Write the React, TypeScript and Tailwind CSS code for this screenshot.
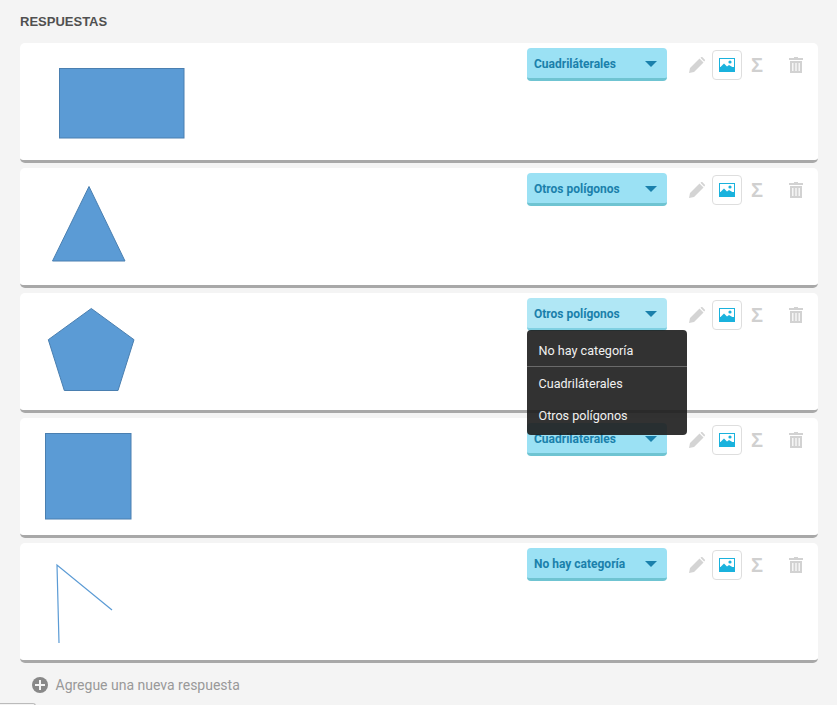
import React from 'react';

const answers = [
  { id: 1, label: 'Cuadriláterales', shape: 'rect' },
  { id: 2, label: 'Otros polígonos', shape: 'triangle' },
  { id: 3, label: 'Otros polígonos', shape: 'pentagon', open: true },
  { id: 4, label: 'Cuadriláterales', shape: 'square' },
  { id: 5, label: 'No hay categoría', shape: 'lines' },
];

function Shape({ kind }: { kind: string }) {
  return (
    <svg width="180" height="117" viewBox="0 0 180 117" className="shrink-0">
      {kind === 'rect' && <rect x="39.5" y="25.5" width="124.5" height="69.5" fill="#5b9bd5" stroke="#4a7fb0" />}
      {kind === 'triangle' && <polygon points="69,18.5 32.5,93 105,93" fill="#5b9bd5" stroke="#4a7fb0" />}
      {kind === 'pentagon' && <polygon points="71.3,15.5 114,46.7 98,97.5 44.3,97.5 28.3,46.7" fill="#5b9bd5" stroke="#4a7fb0" />}
      {kind === 'square' && <rect x="25.5" y="15.5" width="85.5" height="85.5" fill="#5b9bd5" stroke="#4a7fb0" />}
      {kind === 'lines' && <polyline points="39,100 37,22 92,67" fill="none" stroke="#5b9bd5" strokeWidth="1.2" />}
    </svg>
  );
}

function Tools() {
  return (
    <div className="flex items-start">
      <svg width="16" height="16" viewBox="0 0 16 16" className="mt-[14px] ml-[22px] shrink-0" fill="#d4d4d4">
        <path d="M0 16l1-5L10.5 1.5l4 4L5 15zM11.5 .8l.6-.5c.4-.4 1-.4 1.4 0l2.2 2.2c.4.4.4 1 0 1.4l-.6.6z" />
      </svg>
      <div className="ml-[7px] mt-[7px] flex h-[30px] w-[30px] shrink-0 items-center justify-center rounded-[4px] border border-[#dedede] bg-white">
        <svg width="16" height="14" viewBox="0 0 16 14">
          <rect width="16" height="14" fill="#1ab2dd" />
          <rect x="1" y="1" width="14" height="8" fill="#fff" />
          <circle cx="11" cy="4" r="1.6" fill="#1ab2dd" />
          <path d="M1 9.5 L5 5.5 L8 8.5 L10 7 L15 10 V13 H1Z" fill="#1ab2dd" />
        </svg>
      </div>
      <span className="ml-[9px] mt-[12px] w-[13px] shrink-0 font-['Liberation_Sans',sans-serif] text-[20px] leading-[20px] font-bold text-[#d0d0d0]">Σ</span>
      <svg width="14" height="16" viewBox="0 0 14 16" className="ml-[25px] mt-[14px] shrink-0" fill="#d2d2d2">
        <path d="M5 0h4v1h5v2H0V1h5zM1 4h12v12H1zM3.2 6v8h1.2V6zM6.4 6v8h1.2V6zM9.6 6v8h1.2V6z" fillRule="evenodd" />
      </svg>
    </div>
  );
}

function CategoryMenu() {
  return (
    <div className="absolute left-0 top-[32px] z-10 w-[160px] rounded-[4px] bg-[#1c1c1c]/90 font-['Roboto',sans-serif] text-[12.6px] text-[#f0f0f0]">
      <div className="flex h-[37px] items-center border-b border-[#6a6a6a] pl-[11.5px] pt-[6px]">No hay categoría</div>
      <div className="flex h-[33px] items-center pl-[11.5px] pt-[1px]">Cuadriláterales</div>
      <div className="flex h-[35px] items-center pb-[3px] pl-[11.5px]">Otros polígonos</div>
    </div>
  );
}

function AnswerCard({ label, shape, open }: { label: string; shape: string; open?: boolean }) {
  return (
    <div className="flex h-[120px] rounded-[5px] border-b-[3px] border-[#a8a8a8] bg-white">
      <Shape kind={shape} />
      <div className="relative ml-[327px] mt-[5px] h-[33px] w-[140px] shrink-0">
        <div className={`flex h-[33px] items-center justify-between rounded-[4px] border-b-[3px] pl-[7px] pr-[10px] pt-[1px] font-['Roboto',sans-serif] text-[12px] font-bold ${open ? 'border-[#7fd0e2] bg-[#b0e7f5]' : 'border-[#6fc4d2] bg-[#9be1f4]'} text-[#1a80ab]`}>
          <span>{label}</span>
          <span className="h-0 w-0 border-x-[6px] border-t-[6px] border-x-transparent border-t-[#1a80ab]" />
        </div>
        {open && <CategoryMenu />}
      </div>
      <Tools />
    </div>
  );
}

export default function App() {
  return (
    <div className="h-[705px] w-[837px] overflow-hidden bg-[#f4f4f4]">
      <div className="px-[20px] pt-[14px]">
        <h2 className="font-['Liberation_Sans',sans-serif] text-[13px] leading-[16px] font-bold text-[#505050]">RESPUESTAS</h2>
      </div>
      <div className="mt-[13px] ml-[20px] flex w-[798px] flex-col gap-[5px]">
        {answers.map((a) => (
          <AnswerCard key={a.id} label={a.label} shape={a.shape} open={a.open} />
        ))}
      </div>
      <div className="ml-[32px] mt-[14px] flex h-[16px] items-center gap-[7.5px]">
        <span className="flex h-4 w-4 items-center justify-center rounded-full bg-[#888888]">
          <svg width="10" height="10" viewBox="0 0 10 10" fill="#f4f4f4">
            <path d="M4 0h2v4h4v2H6v4H4V6H0V4h4z" />
          </svg>
        </span>
        <span className="font-['Roboto',sans-serif] text-[14px] text-[#999999]">Agregue una nueva respuesta</span>
      </div>
      <div className="mt-[10px] h-[4px] w-[36px] rounded-tr-[3px] border-t border-r border-[#bbbbbb]" />
    </div>
  );
}
